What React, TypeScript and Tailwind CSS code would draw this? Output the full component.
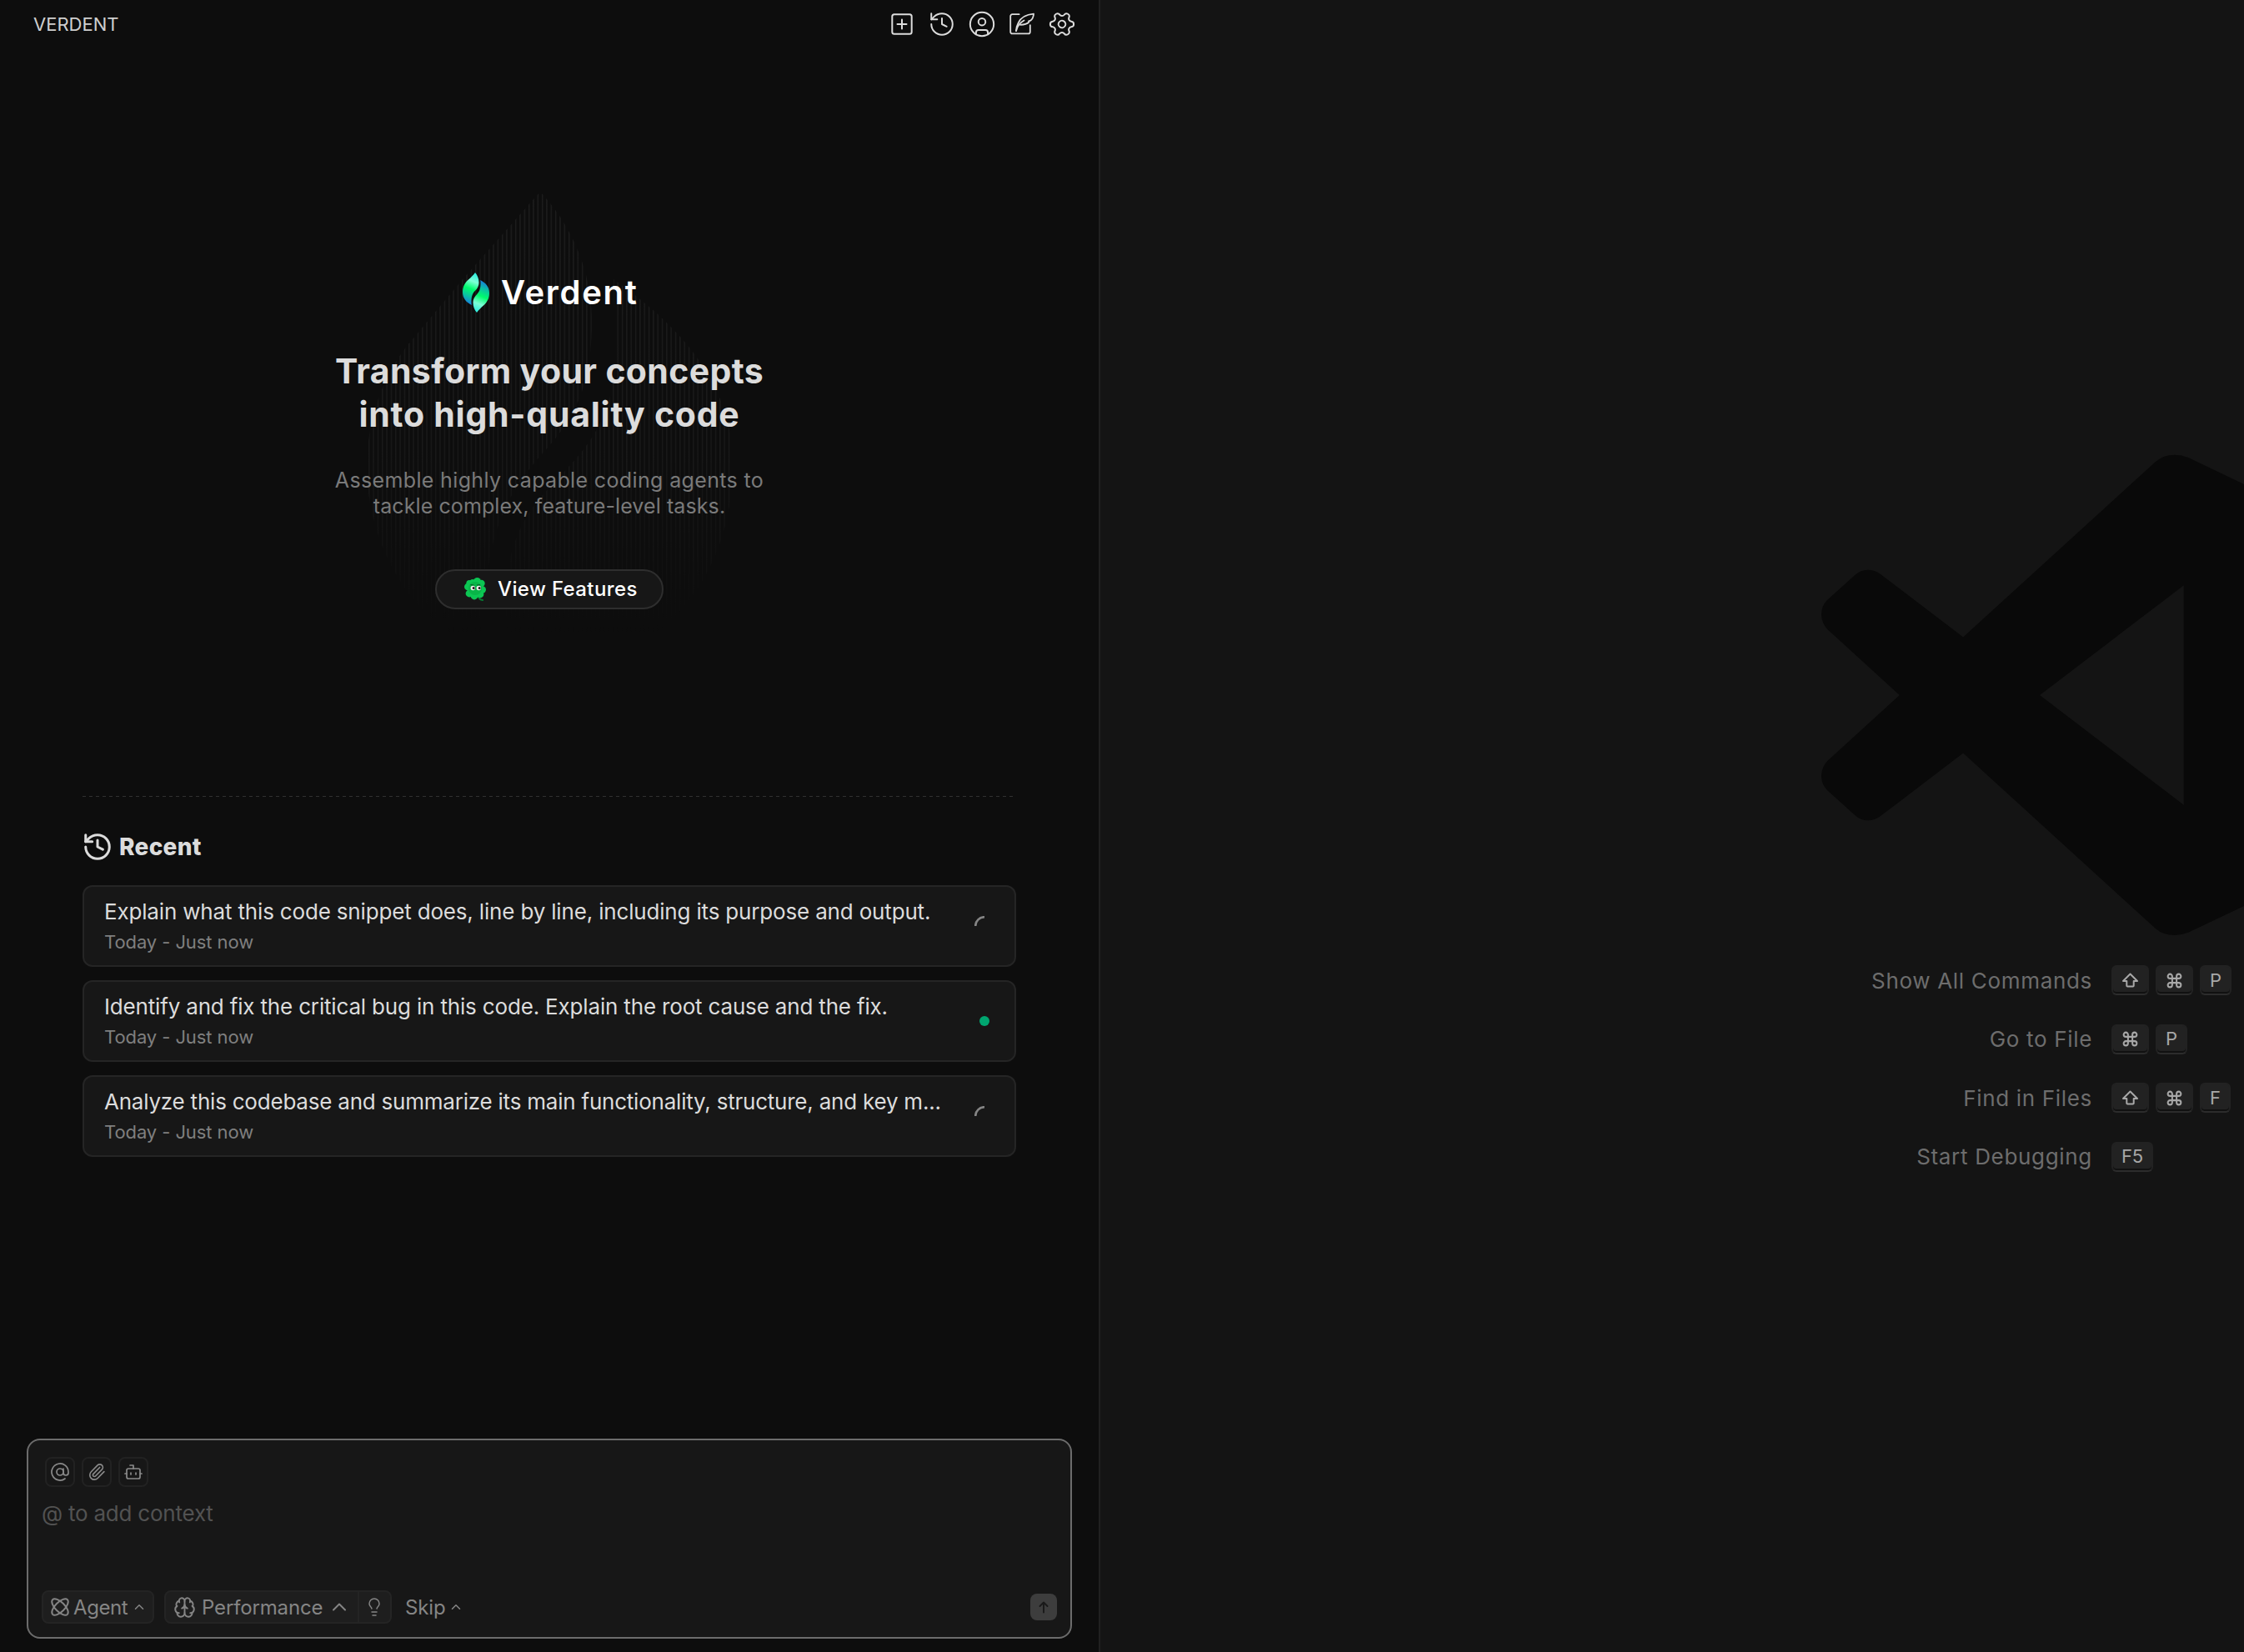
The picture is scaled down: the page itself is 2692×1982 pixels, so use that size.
import type { ReactNode } from 'react';
import {
  AtSign,
  Bot,
  Brain,
  ChevronUp,
  CircleUser,
  Command,
  History,
  Lightbulb,
  Paperclip,
  Settings,
} from 'lucide-react';

type Status = 'running' | 'done';

const RECENT: { title: string; time: string; status: Status; tracking: string }[] = [
  {
    title: 'Explain what this code snippet does, line by line, including its purpose and output.',
    time: 'Today - Just now',
    status: 'running',
    tracking: 'tracking-[-0.17px]',
  },
  {
    title: 'Identify and fix the critical bug in this code. Explain the root cause and the fix.',
    time: 'Today - Just now',
    status: 'done',
    tracking: 'tracking-[-0.17px]',
  },
  {
    title: 'Analyze this codebase and summarize its main functionality, structure, and key m...',
    time: 'Today - Just now',
    status: 'running',
    tracking: 'tracking-[-0.22px]',
  },
];

const SHORTCUTS = [
  { label: 'Show All Commands', keys: ['shift', 'cmd', 'P'] },
  { label: 'Go to File', keys: ['cmd', 'P'] },
  { label: 'Find in Files', keys: ['shift', 'cmd', 'F'] },
  { label: 'Start Debugging', keys: ['F5'] },
];

function NewIcon() {
  return (
    <svg width="28" height="28" viewBox="0 0 28 28" fill="none" stroke="currentColor" strokeWidth="2" strokeLinecap="round">
      <rect x="2.3" y="2.3" width="23.4" height="23.4" rx="2.5" />
      <path d="M14 8.5v11M8.5 14h11" />
    </svg>
  );
}

function FeatherEditIcon() {
  return (
    <svg width="30" height="28" viewBox="0 0 30 28" fill="none" stroke="currentColor" strokeWidth="1.8" strokeLinecap="round" strokeLinejoin="round">
      <path d="M11.6 2.2H3.4a2.2 2.2 0 0 0-2.2 2.2v18.8a2.2 2.2 0 0 0 2.2 2.2h19.2a2.2 2.2 0 0 0 2.2-2.2v-8" />
      <path d="M8 22c0-3 .8-6 2.6-9.5C13.5 6.3 18.5 2.6 29 1.7c-.2 4-1.6 6.3-3.8 8l-2.2.6.4 1.2c-2.6 2.5-5.6 3.1-10.4 3.3" />
      <path d="M8 22c1.5-6 4.8-10 9.5-12.5" />
    </svg>
  );
}

function ShiftIcon() {
  return (
    <svg width="21" height="18" viewBox="0 0 21 18" fill="none" stroke="currentColor" strokeWidth="2" strokeLinejoin="round">
      <path d="M10.500 1.500L19 10h-4.300v5.500a1 1 0 0 1-1 1H7.300a1 1 0 0 1-1-1V10H2Z" />
    </svg>
  );
}

function VerdentMark() {
  return (
    <svg width="32" height="48" viewBox="0 0 32 48" className="shrink-0">
      <defs>
        <linearGradient id="leaf" x1="0.6" y1="0" x2="0.4" y2="1">
          <stop offset="0" stopColor="#2feee0" />
          <stop offset="0.25" stopColor="#7dffd6" />
          <stop offset="0.5" stopColor="#00fb6c" />
          <stop offset="0.75" stopColor="#0bbfa5" />
          <stop offset="1" stopColor="#1877e6" />
        </linearGradient>
      </defs>
      <path id="half" d="M15 0c2.8 3.2 4.5 7.3 4.5 12 0 4-1.6 7-4.5 9.8-3.4 3.4-5.3 8-4.3 17.2C4 35.5 0 30.5 0 23.5 0 16.5 3 12 7 8.5 10 5.8 13 3 15 0Z" fill="url(#leaf)" />
      <use href="#half" transform="rotate(180 16 24)" />
    </svg>
  );
}

function Clover() {
  return (
    <svg width="26" height="29" viewBox="0 0 26 29">
      <path d="M17 23c.5 2 2 3.5 5 4" stroke="#067a33" strokeWidth="2" fill="none" strokeLinecap="round" />
      <g fill="#0cc653">
        <circle cx="10" cy="5.5" r="3.6" />
        <circle cx="15.5" cy="4.4" r="4.4" />
        <circle cx="20.5" cy="7" r="4.2" />
        <circle cx="21.8" cy="14.5" r="4.2" />
        <circle cx="19" cy="20" r="4.4" />
        <circle cx="12" cy="22" r="4.4" />
        <circle cx="6" cy="19" r="4.4" />
        <circle cx="4.3" cy="11" r="4.3" />
        <circle cx="6" cy="6.5" r="3.6" />
      </g>
      <circle cx="13" cy="13" r="8" fill="#09b548" />
      <path d="M7.5 8.6l4 .4M15 9l4-.4" stroke="#055c26" strokeWidth="1.2" />
      <circle cx="10.3" cy="12.5" r="2.7" fill="#f4efef" />
      <circle cx="17.3" cy="12.5" r="2.7" fill="#f4efef" />
      <circle cx="11.2" cy="12.6" r="1.5" fill="#25171c" />
      <circle cx="18.2" cy="12.6" r="1.5" fill="#25171c" />
    </svg>
  );
}

// Striped leaf behind the hero, fades out towards the bottom
function Watermark() {
  return (
    <svg className="absolute left-[440px] top-[230px]" width="440" height="540" viewBox="440 230 440 540">
      <defs>
        <pattern id="stripes" x="442" y="0" width="5.33" height="10" patternUnits="userSpaceOnUse">
          <rect width="1.5" height="10" fill="#fff" />
        </pattern>
        <linearGradient id="fade" x1="0" y1="230" x2="0" y2="766" gradientUnits="userSpaceOnUse">
          <stop offset="0" stopColor="#fff" stopOpacity="0.07" />
          <stop offset="0.6" stopColor="#fff" stopOpacity="0.05" />
          <stop offset="1" stopColor="#fff" stopOpacity="0" />
        </linearGradient>
        <mask id="lines">
          <rect x="440" y="230" width="440" height="540" fill="url(#stripes)" />
        </mask>
      </defs>
      <g fill="url(#fade)" mask="url(#lines)">
        <path d="M648 230C682 266 710 320 710 385C710 460 692 500 650 545C610 590 580 640 580 766H550C480 725 440 640 440 560C440 500 462 445 494 408L555 335Z" />
        <path d="M736 335C800 380 879 450 879 555C879 640 850 712 780 766H610C600 700 610 640 650 595C700 540 738 510 738 420Z" />
      </g>
    </svg>
  );
}

function Spinner() {
  return (
    <svg width="24" height="24" viewBox="0 0 24 24" fill="none">
      <path d="M1.2 12A10.8 10.8 0 0 1 12 1.2" stroke="#858585" strokeWidth="2.6" />
    </svg>
  );
}

function RecentCard({ title, time, status, tracking }: (typeof RECENT)[number]) {
  return (
    <button className="flex h-[98px] w-full items-center justify-between rounded-xl border-2 border-[#252525] bg-[#171717] px-6 text-left">
      <div className="flex flex-col gap-[6px] whitespace-nowrap pb-px">
        <p className={`text-[26px] leading-[32px] text-[#dcdcdc] ${tracking}`}>{title}</p>
        <p className="text-[22px] leading-[28px] tracking-[-0.08px] text-[#7f7f7f]">{time}</p>
      </div>
      <span className="flex size-6 shrink-0 items-center justify-center">
        {status === 'running' ? <Spinner /> : <span className="size-3 rounded-full bg-[#00a670]" />}
      </span>
    </button>
  );
}

function ContextButton({ children }: { children: ReactNode }) {
  return (
    <button className="flex size-9 items-center justify-center rounded-lg border-2 border-[#222222] text-[#8a8a8a]">
      {children}
    </button>
  );
}

function Composer() {
  return (
    <div className="mx-8 flex h-[240px] flex-col rounded-2xl border-2 border-[#6c6c6c] bg-[#171717]">
      <div className="flex gap-2 pl-5 pt-5">
        <ContextButton>
          <AtSign size={24} strokeWidth={1.7} />
        </ContextButton>
        <ContextButton>
          <Paperclip size={22} strokeWidth={1.8} />
        </ContextButton>
        <ContextButton>
          <Bot size={24} strokeWidth={1.7} />
        </ContextButton>
      </div>
      <p className="mt-4 pl-4 text-[26px] leading-[32px] tracking-[-0.22px] text-[#525252]">@ to add context</p>

      <div className="mb-4 mt-auto flex items-center px-4 text-[24px] text-[#858585]">
        <button className="flex h-10 w-[135px] items-center rounded-lg border-2 border-[#242424] bg-[#1e1e1e] pl-[7px]">
          <svg width="26" height="26" viewBox="0 0 24 24" fill="none" stroke="currentColor" strokeWidth="1.8">
            <path d="M20.2 20.2c2.04-2.03.02-7.36-4.5-11.9-4.54-4.52-9.87-6.54-11.9-4.5-2.04 2.03-.02 7.36 4.5 11.9 4.54 4.52 9.87 6.54 11.9 4.5Z" />
            <path d="M15.7 15.7c4.52-4.54 6.54-9.87 4.5-11.9-2.03-2.04-7.36-.02-11.9 4.5-4.52 4.54-6.54 9.87-4.5 11.9 2.03 2.04 7.36.02 11.9-4.5Z" />
          </svg>
          <span className="ml-[3px] pt-px tracking-[-0.4px]">Agent</span>
          <ChevronUp className="ml-[5px]" size={18} strokeWidth={2} />
        </button>
        <div className="ml-3 flex h-10 w-[273px] rounded-lg border-2 border-[#242424] bg-[#1e1e1e]">
          <button className="flex w-[232px] items-center border-r-2 border-[#242424] pl-[9px]">
            <Brain size={27} strokeWidth={1.7} />
            <span className="ml-[7px] pt-px tracking-[-0.15px]">Performance</span>
            <ChevronUp className="ml-[6px]" size={28} strokeWidth={1.7} />
          </button>
          <button className="flex flex-1 items-center justify-center pr-px">
            <Lightbulb size={24} strokeWidth={1.5} />
          </button>
        </div>
        <button className="ml-4 flex items-center">
          <span className="pt-px tracking-[-0.1px]">Skip</span>
          <ChevronUp className="ml-[3px]" size={18} strokeWidth={2} />
        </button>
        <button className="ml-auto flex size-8 items-center justify-center rounded-lg bg-[#3d3d3d] text-[#191919]">
          <svg width="12" height="15" viewBox="0 0 12 15" fill="none" stroke="currentColor" strokeWidth="1.9" strokeLinecap="round" strokeLinejoin="round">
            <path d="M6 13.5V1.5M1.500 6L6 1.500L10.500 6" />
          </svg>
        </button>
      </div>
    </div>
  );
}

function Sidebar() {
  return (
    <aside className="relative flex w-[1320px] shrink-0 flex-col border-r-2 border-[#202020] bg-[#0d0d0d] pb-4">
      <Watermark />

      <header className="flex h-[58px] items-center justify-between pl-10 pr-[27px]">
        <span className="text-[22px] text-[#cfcfcf]">VERDENT</span>
        <div className="flex items-center gap-[14px] text-[#dcdcdc] [&>span]:flex [&>span]:w-[34px] [&>span]:justify-center">
          <span><NewIcon /></span>
          <span><History size={34} strokeWidth={1.4} /></span>
          <span><CircleUser size={34} strokeWidth={1.4} /></span>
          <span><FeatherEditIcon /></span>
          <span><Settings className="rotate-30" size={34} strokeWidth={1.4} /></span>
        </div>
      </header>

      {/* Hero */}
      <section className="relative mt-[269px] flex h-[404px] flex-col items-center text-center">
        <div className="flex h-12 w-[208px] items-center gap-[14px]">
          <VerdentMark />
          <span className="text-[40px] font-semibold leading-[48px] tracking-[1.7px] text-white">Verdent</span>
        </div>
        <h1 className="mt-[44px] whitespace-nowrap text-[41px] font-bold leading-[52px] text-[#dcdcdc]">
          <span className="tracking-[0.35px]">Transform your concepts</span>
          <br />
          <span className="tracking-[0.75px]">into high-quality code</span>
        </h1>
        <p className="mt-[38px] whitespace-nowrap text-[25px] leading-[31px] text-[#7a7a7a]">
          <span className="tracking-[0.36px]">Assemble highly capable coding agents to</span>
          <br />
          <span className="tracking-[0.1px]">tackle complex, feature-level tasks.</span>
        </p>
        <button className="mt-[60px] flex h-12 w-[274px] items-center rounded-full border-2 border-[#2e2e2e] bg-[#171717] pl-[33px] text-[24px] font-medium text-white">
          <Clover />
          <span className="ml-[14px] whitespace-nowrap tracking-[0.38px]">View Features</span>
        </button>
      </section>

      {/* Recent tasks */}
      <section className="mx-[99px] mt-[224px] flex w-[1120px] flex-col">
        <div className="h-px w-full bg-[repeating-linear-gradient(90deg,#303030_0_4px,transparent_4px_8px)]" />
        <div className="mt-[43px] flex h-[34px] items-center text-[#dcdcdc]">
          <History className="-ml-[1px]" size={38} strokeWidth={1.9} />
          <h2 className="ml-[7px] text-[28px] font-extrabold leading-[34px] tracking-[0.3px]">Recent</h2>
        </div>
        <div className="mt-[29px] flex flex-col gap-4">
          {RECENT.map((item) => (
            <RecentCard key={item.title} {...item} />
          ))}
        </div>
      </section>

      <div className="mt-auto">
        <Composer />
      </div>
    </aside>
  );
}

function Key({ name }: { name: string }) {
  return (
    <kbd className="flex h-9 items-center rounded-md border-2 border-[#222222] border-b-[#2c2c2c] bg-[#222222] px-[10px] font-[Inter] text-[22px] tracking-[-0.3px] text-[#a8a8a8] shadow-[inset_0_-2px_0_#111111]">
      {name === 'shift' && <ShiftIcon />}
      {name === 'cmd' && <Command size={21} strokeWidth={2.3} />}
      {name.length < 3 && name}
    </kbd>
  );
}

function EmptyEditor() {
  return (
    <main className="flex flex-1 flex-col overflow-hidden bg-[#141414]">
      <svg className="ml-[865px] mt-[545px] shrink-0" width="507" height="578" viewBox="2185 545 507 578" fill="#090909">
        <path
          fillRule="evenodd"
          d="M2278.8 834L2192.2 754.9Q2185 747 2185 737Q2185 727 2192.2 719.7L2225.2 690Q2232 683.7 2240.8 683.7Q2249 683.7 2255.7 688.8L2355.1 764.4L2585.9 554Q2595 545.7 2609 545.7Q2617 545.7 2625.2 548.9L2692 580.9V1087L2625.2 1118.8Q2617 1122 2609 1122Q2595 1122 2585.9 1114L2355.1 903.6L2255.7 979.2Q2249 984.3 2240.8 984.3Q2232 984.3 2225.2 978L2192.2 948.3Q2185 941 2185 931Q2185 921 2192.2 913.1ZM2619.8 702.3L2447 834L2619.8 965.7Z"
        />
      </svg>
      <div className="mt-[35px] flex flex-col gap-[34.67px]">
        {SHORTCUTS.map(({ label, keys }) => (
          <div key={label} className="flex h-9 items-center">
            <span className="w-[1190px] text-right text-[26px] tracking-[0.68px] text-[#6d6d6d]">{label}</span>
            <div className="ml-[23px] flex gap-2">
              {keys.map((key) => (
                <Key key={key} name={key} />
              ))}
            </div>
          </div>
        ))}
      </div>
    </main>
  );
}

export default function App() {
  return (
    <div className="flex h-[1982px] w-[2692px] overflow-hidden font-[Inter,'Liberation_Sans',sans-serif]">
      <Sidebar />
      <EmptyEditor />
    </div>
  );
}
